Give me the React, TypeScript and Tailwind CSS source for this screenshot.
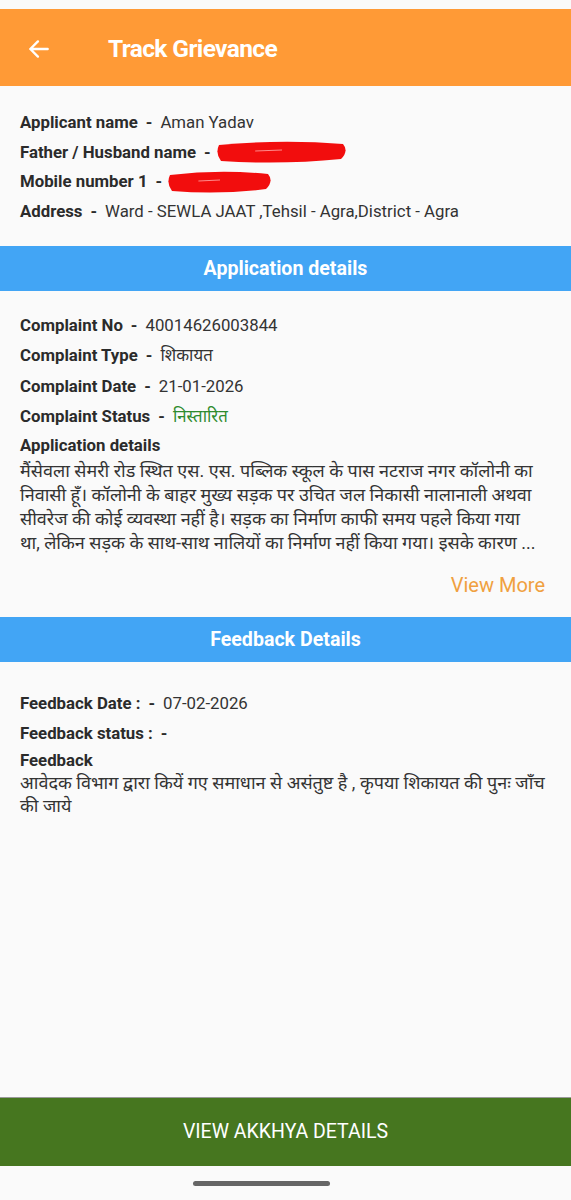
import React from "react";

const Row = ({ label, children, gap = "mt-0" }: { label: string; children?: React.ReactNode; gap?: string }) => (
  <div className={`flex items-center h-[29.5px] ${gap}`}>
    <span className="font-bold text-[#2b2b2b]">{label}</span>
    <span className="font-bold text-[#2b2b2b] mx-[8px]">-</span>
    {children}
  </div>
);

const Scribble = ({ w }: { w: number }) => (
  <svg width={w} height="26" viewBox={`0 0 ${w} 26`} className="-ml-1">
    <path
      d={`M4 6 Q ${w / 2} 0 ${w - 6} 5 Q ${w} 12 ${w - 8} 20 Q ${w / 2} 26 6 22 Q 0 14 4 6 Z`}
      fill="#f20d0d"
    />
    <path d={`M${w * 0.3} 12 L ${w * 0.5} 11`} stroke="#ff8a8a" strokeWidth="1" />
  </svg>
);

const Bar = ({ title }: { title: string }) => (
  <div className="h-[45px] bg-[#42a5f5] flex items-center justify-center text-white font-bold text-[19.6px]">
    {title}
  </div>
);

export default function App() {
  return (
    <div
      className="w-[571px] h-[1200px] bg-[#fafafa] flex flex-col text-[16.8px] text-[#333]"
      style={{ fontFamily: "Roboto, 'Noto Sans', sans-serif" }}
    >
      <div className="h-[9px]" />
      <div className="h-[77px] bg-[#ff9a36] flex items-center text-white pt-[3px]">
        <svg width="26" height="26" viewBox="0 0 24 24" className="ml-[26px]" fill="none" stroke="white" strokeWidth="2.2" strokeLinecap="round" strokeLinejoin="round">
          <path d="M20 12H4M11 5l-7 7 7 7" />
        </svg>
        <h1 className="ml-[56px] font-bold text-[24.5px] tracking-tight">Track Grievance</h1>
      </div>

      <div className="px-[20px] pt-[22px] pb-[20px]">
        <Row label="Applicant name">
          <span>Aman Yadav</span>
        </Row>
        <Row label="Father / Husband name">
          <Scribble w={134} />
        </Row>
        <Row label="Mobile number 1">
          <Scribble w={108} />
        </Row>
        <Row label="Address">
          <span>Ward - SEWLA JAAT ,Tehsil - Agra,District - Agra</span>
        </Row>
      </div>

      <Bar title="Application details" />

      <div className="px-[20px] pt-[20px]">
        <Row label="Complaint No">
          <span>40014626003844</span>
        </Row>
        <Row label="Complaint Type">
          <span>शिकायत</span>
        </Row>
        <Row label="Complaint Date" gap="mt-[2px]">
          <span>21-01-2026</span>
        </Row>
        <Row label="Complaint Status">
          <span className="text-[#2e8b2e]">निस्तारित</span>
        </Row>
        <div className="font-bold text-[#2b2b2b] mt-[3px] leading-[22px]">Application details</div>
        <p className="mt-[3px] leading-[24px] text-[18px] text-[#333] pr-[8px]">
          मैंसेवला सेमरी रोड स्थित एस. एस. पब्लिक स्कूल के पास नटराज नगर कॉलोनी का निवासी हूँ। कॉलोनी के बाहर मुख्य सड़क पर उचित जल निकासी नालानाली अथवा सीवरेज की कोई व्यवस्था नहीं है। सड़क का निर्माण काफी समय पहले किया गया था, लेकिन सड़क के साथ-साथ नालियों का निर्माण नहीं किया गया। इसके कारण ...
        </p>
        <div className="flex justify-end mt-[15px] mb-[17px] pr-[6px]">
          <span className="text-[#f0a040] text-[20px]">View More</span>
        </div>
      </div>

      <Bar title="Feedback Details" />

      <div className="px-[20px] pt-[27px]">
        <Row label="Feedback Date : ">
          <span>07-02-2026</span>
        </Row>
        <Row label="Feedback status : " />
        <div className="font-bold text-[#2b2b2b] leading-[22px] mt-[1px]">Feedback</div>
        <p className="leading-[23px] text-[18px] text-[#333]">
          आवेदक विभाग द्वारा कियें गए समाधान से असंतुष्ट है , कृपया शिकायत की पुनः जाँच की जाये
        </p>
      </div>

      <div className="flex-1" />

      <div className="h-[69px] bg-[#46761f] border-t border-[#9a9a9a] flex items-center justify-center text-white text-[19.5px]">
        VIEW AKKHYA DETAILS
      </div>
      <div className="h-[34px] flex items-center">
        <div className="ml-[193px] w-[137px] h-[5px] rounded-full bg-[#666]" />
      </div>
    </div>
  );
}
